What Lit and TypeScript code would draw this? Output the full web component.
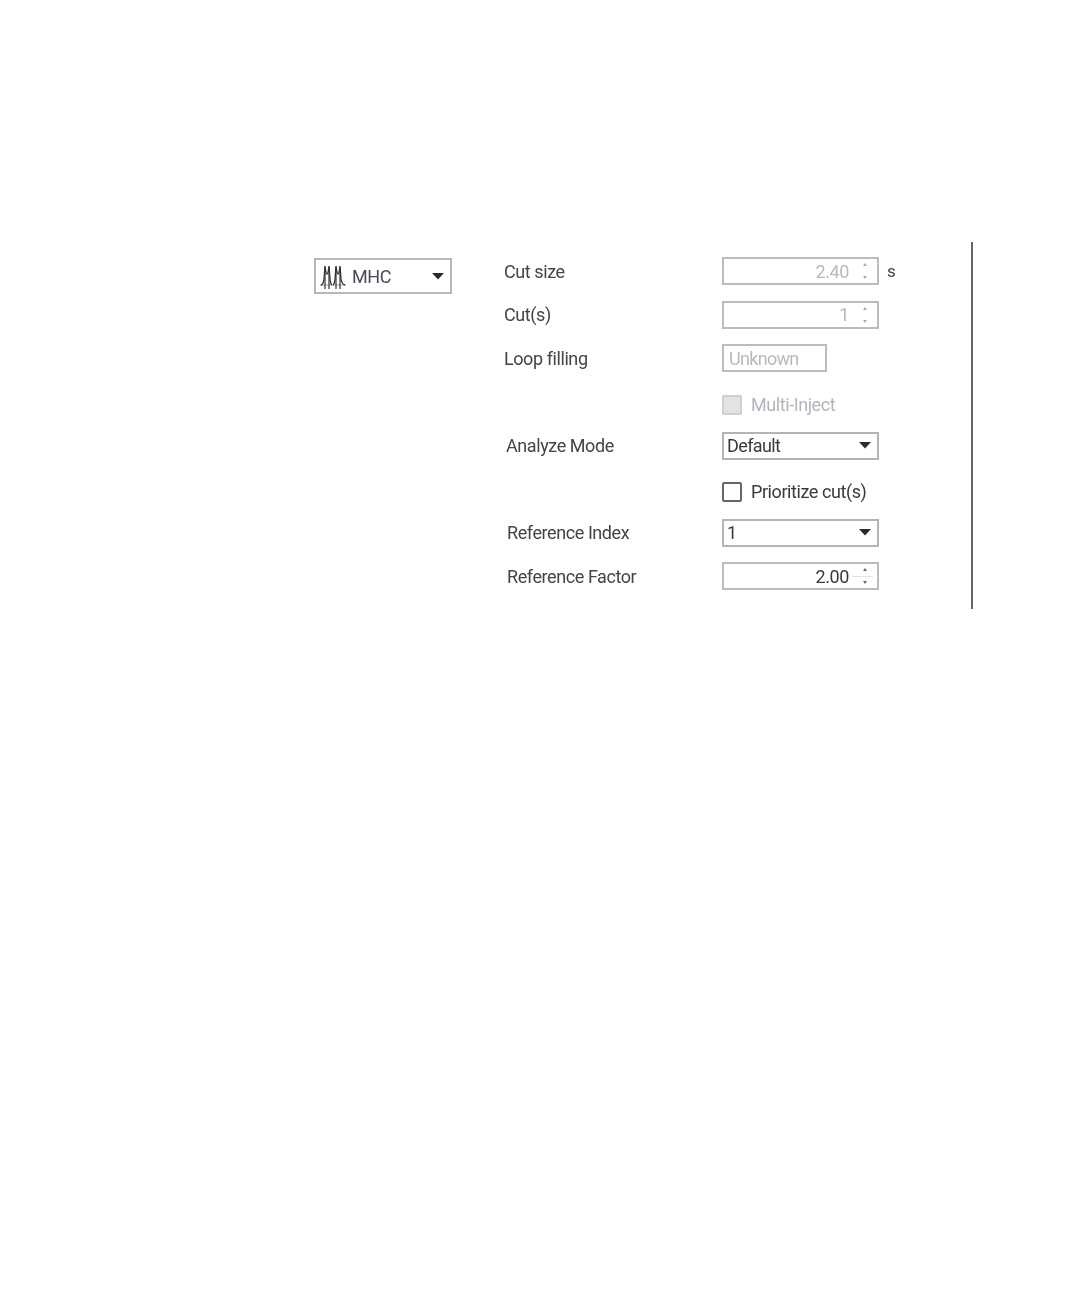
import { LitElement, html, css, svg } from "lit";
import { customElement } from "lit/decorators.js";

const arrow = html`<svg class="arrow" width="12" height="7" viewBox="0 0 12 7"><path d="M0 0H12L6 6.5Z" fill="#2b2b2b"/></svg>`;

@customElement("app-root")
export class AppRoot extends LitElement {
  static styles = css`
    :host { display: block; width: 1080px; height: 1296px; background: #fff; font-family: Roboto, "Noto Sans", sans-serif; font-size: 18px; letter-spacing: -0.42px; color: #3a3a3a; }
    * { box-sizing: border-box; }
    .page { display: flex; padding: 242px 0 0 314px; align-items: flex-start; filter: blur(0.4px); }
    .mode { margin-top: 16px; width: 138px; height: 36px; border: 2px solid #b8b8b8; display: flex; align-items: center; padding: 0 6px 0 3px; gap: 5px; color: #4a4a55; font-size: 18px; }
    .mode .name { flex: 1; }
    .panel { margin-left: 52px; width: 469px; height: 367px; border-right: 2px solid #666; padding-top: 15.3px; display: grid; grid-template-columns: 218px 1fr; grid-auto-rows: 28px; row-gap: 15.6px; align-items: center; }
    .label { white-space: nowrap; color: #444; }
    .indent1 { padding-left: 2px; }
    .indent2 { padding-left: 3px; }
    .ctl { display: flex; align-items: center; gap: 8px; }
    .box { width: 157px; height: 28px; border: 2px solid #bcbcbc; display: flex; align-items: center; white-space: nowrap; font-size: 18px; }
    .spin { justify-content: flex-end; padding-right: 28px; position: relative; }
    .spin .btns { position: absolute; right: 4px; top: 1px; bottom: 1px; width: 17px; display: flex; flex-direction: column; align-items: center; justify-content: space-between; padding: 3px 0; }
    .spin.off { color: #b9b9b9; }
    .spin.on { color: #3a3a3a; }
    .tri { width: 0; height: 0; border-left: 2.5px solid transparent; border-right: 2.5px solid transparent; }
    .tri.up { border-bottom: 3px solid #666; }
    .tri.down { border-top: 3px solid #666; }
    .spin.off .tri.up { border-bottom-color: #aaa; }
    .spin.off .tri.down { border-top-color: #aaa; }
    .spin.on .btns::after { content: ""; position: absolute; left: -4px; right: 0; top: 50%; height: 1px; background: #e2e2e2; }
    .text { width: 105px; padding-left: 5px; color: #b9b9b9; letter-spacing: -0.7px; }
    .select { padding: 0 6px 0 3px; justify-content: space-between; color: #3a3a3a; border-color: #b4b4b4; letter-spacing: -0.6px; }
    .check { gap: 9px; padding-top: 5px; white-space: nowrap; }
    .cb { width: 20px; height: 20px; border: 2px solid #666; border-radius: 2px; flex: none; }
    .check.off { color: #b4b4be; }
    .check.off .cb { background: #e2e3e3; border-color: #cfcfcf; }
    .unit { font-size: 17px; color: #444; }
  `;

  private spin(value: string, on: boolean) {
    return html`<div class="box spin ${on ? "on" : "off"}">${value}
      <span class="btns"><i class="tri up"></i><i class="tri down"></i></span></div>`;
  }

  render() {
    return html`<div class="page">
      <div class="mode">
        <svg width="28" height="30" viewBox="0 0 28 30" fill="none" stroke="#333" stroke-width="1.3">
          ${svg`<path d="M1 24H27" stroke="#999" stroke-width="1"/>
          <path d="M2 24C4.5 23.5 4.5 21 5 18L6 5.5C6.5 9 7 13 8 13C9 13 9.5 9 10 5.5L11 18C11.5 21 11.5 23.5 13 24"/>
          <path d="M14 24C15.5 23.5 15.5 21 16 18L17 5.5C17.5 9 18 13 19 13C20 13 20.5 9 21 5.5L22 18C22.5 21 23.5 23.5 26 24"/>
          <path d="M6 5V28M10 5V28M17 5V28M21 5V28" stroke-width="1.2"/>`}
        </svg>
        <span class="name">MHC</span>
        ${arrow}
      </div>
      <div class="panel">
        <div class="label">Cut size</div>
        <div class="ctl">${this.spin("2.40", false)}<span class="unit">s</span></div>
        <div class="label">Cut(s)</div>
        <div class="ctl">${this.spin("1", false)}</div>
        <div class="label">Loop filling</div>
        <div class="ctl"><div class="box text">Unknown</div></div>
        <div></div>
        <div class="ctl check off"><span class="cb"></span>Multi-Inject</div>
        <div class="label indent1">Analyze Mode</div>
        <div class="ctl"><div class="box select">Default ${arrow}</div></div>
        <div></div>
        <div class="ctl check"><span class="cb"></span>Prioritize cut(s)</div>
        <div class="label indent2">Reference Index</div>
        <div class="ctl"><div class="box select">1 ${arrow}</div></div>
        <div class="label indent2">Reference Factor</div>
        <div class="ctl">${this.spin("2.00", true)}</div>
      </div>
    </div>`;
  }
}
